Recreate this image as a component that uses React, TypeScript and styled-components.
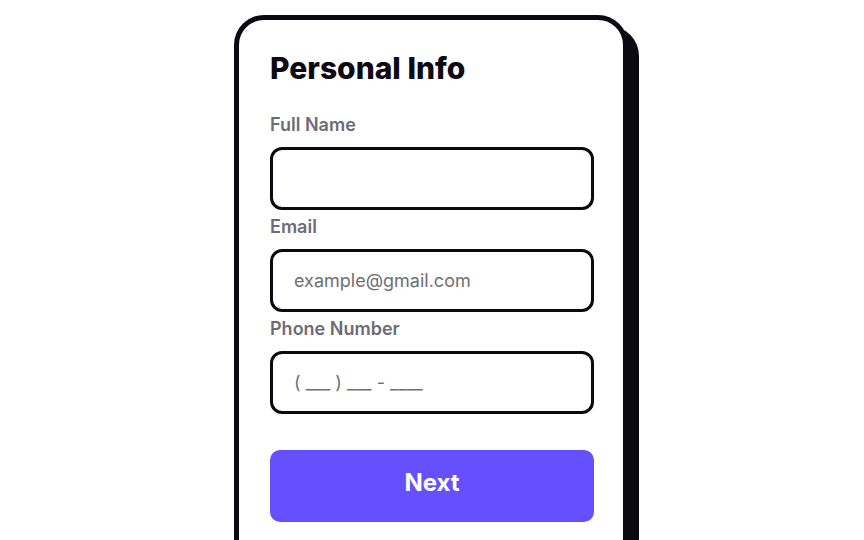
import React from 'react';
import styled, { createGlobalStyle } from 'styled-components';

const GlobalStyle = createGlobalStyle`
  * {
    box-sizing: border-box;
  }

  body {
    margin: 0;
    background: #ffffff;
    font-family: Inter, 'Noto Sans', sans-serif;
    height: 540px;
    overflow: hidden;
  }
`;

const Page = styled.main`
  display: flex;
  justify-content: center;
  padding-top: 15px;
  padding-right: 2px;
`;

const Card = styled.form`
  width: 394px;
  min-height: 580px;
  background: #ffffff;
  border: 5px solid #0b0a13;
  border-radius: 30px;
  box-shadow: 11px 11px 0 #0b0a13;
  padding: 31px 30px 40px 31px;
  display: flex;
  flex-direction: column;
`;

const Title = styled.h1`
  margin: 0 0 29px;
  font-size: 30px;
  line-height: 34px;
  font-weight: 800;
  color: #0b0a13;
`;

const Fields = styled.div`
  display: flex;
  flex-direction: column;
  gap: 6px;
`;

const Field = styled.label`
  display: flex;
  flex-direction: column;
  gap: 12px;
`;

const LabelText = styled.span`
  font-size: 18px;
  line-height: 21px;
  font-weight: 600;
  color: #6d6c76;
`;

const Input = styled.input`
  width: 324px;
  height: 63px;
  border: 3px solid #0b0a13;
  border-radius: 12px;
  padding: 0 20px 0 21px;
  font-family: inherit;
  font-size: 18px;
  color: #0b0a13;
  background: #ffffff;
  outline: none;

  &::placeholder {
    color: #707070;
  }
`;

const NextButton = styled.button`
  margin-top: 36px;
  width: 324px;
  height: 72px;
  border: none;
  border-radius: 10px;
  background: #654ffe;
  color: #ffffff;
  font-family: inherit;
  font-size: 24px;
  font-weight: 700;
  padding-bottom: 8px;
  cursor: pointer;
`;

export default () => (
  <>
    <GlobalStyle />
    <Page>
      <Card onSubmit={(e) => e.preventDefault()}>
        <Title>Personal Info</Title>
        <Fields>
          <Field>
            <LabelText>Full Name</LabelText>
            <Input type="text" />
          </Field>
          <Field>
            <LabelText>Email</LabelText>
            <Input type="email" placeholder="example@gmail.com" />
          </Field>
          <Field>
            <LabelText>Phone Number</LabelText>
            <Input type="tel" placeholder="( ___ ) ___ - ____" />
          </Field>
        </Fields>
        <NextButton type="submit">Next</NextButton>
      </Card>
    </Page>
  </>
);
